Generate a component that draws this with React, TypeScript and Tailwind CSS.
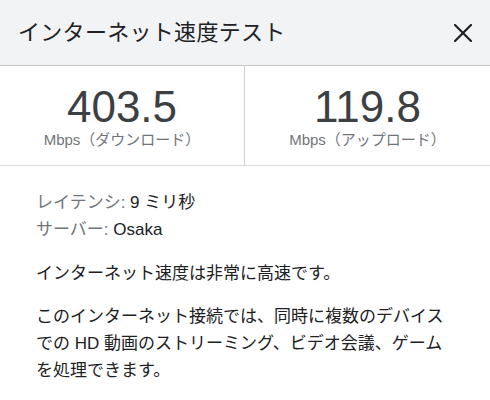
const FONT = "font-['Liberation_Sans','Noto_Sans_CJK_JP',sans-serif]"

const STATS = [
  { value: "403.5", label: "Mbps（ダウンロード）" },
  { value: "119.8", label: "Mbps（アップロード）" },
]

export default function App() {
  return (
    <div className={`w-[490px] h-[400px] bg-white overflow-hidden ${FONT}`}>
      <div className="h-[66px] bg-[#f1f3f4] border-b border-[#c6c6c6] flex items-center justify-between pl-[18px] pr-[18px]">
        <h2 className="text-[22px] text-[#202124] tracking-[0.3px]">インターネット速度テスト</h2>
        <svg width="18" height="18" viewBox="0 0 18 18" className="text-[#202124]">
          <path d="M1 1L17 17M17 1L1 17" stroke="currentColor" strokeWidth="2.2" strokeLinecap="square" />
        </svg>
      </div>

      <div className="grid grid-cols-2 h-[100px] border-b border-[#dadce0]">
        {STATS.map((s, i) => (
          <div
            key={i}
            className={`flex flex-col items-center justify-center pt-[2px] ${i === 0 ? "border-r border-[#d0d0d0]" : ""}`}
          >
            <div className="text-[44px] leading-[44px] text-[#3c4043]">{s.value}</div>
            <div className="text-[15px] leading-[18px] text-[#70757a] mt-[2px]">{s.label}</div>
          </div>
        ))}
      </div>

      <div className="pl-[36px] pr-[36px] pt-[23px] text-[17px] leading-[27px] text-[#202124]">
        <div>
          <span className="text-[#70757a]">レイテンシ: </span>9 ミリ秒
        </div>
        <div>
          <span className="text-[#70757a]">サーバー: </span>Osaka
        </div>
        <p className="mt-[17px]">インターネット速度は非常に高速です。</p>
        <p className="mt-[16px]">
          このインターネット接続では、同時に複数のデバイスでの HD 動画のストリーミング、ビデオ会議、ゲームを処理できます。
        </p>
      </div>
    </div>
  )
}
